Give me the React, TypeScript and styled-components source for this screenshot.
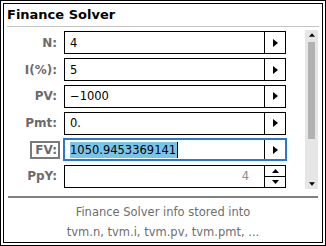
import { FC } from "react";
import styled, { createGlobalStyle } from "styled-components";

const GlobalStyle = createGlobalStyle`
    html, body {
        margin: 0;
        padding: 0;
        background: #ffffff;
    }
    * {
        box-sizing: border-box;
    }
`;

const Frame = styled.div`
    width: 326px;
    height: 246px;
    border: 1px solid #000;
    padding: 2px;
    background: #fff;
`;

const Screen = styled.div`
    height: 100%;
    border: 1px solid #000;
    display: flex;
    flex-direction: column;
    font-family: "DejaVu Sans", "Liberation Sans", sans-serif;
`;

const Title = styled.div`
    height: 23px;
    padding: 3px 0 0 3px;
    font-size: 13px;
    font-weight: bold;
    color: #000;
    line-height: 16px;
`;

const TitleRule = styled.div`
    height: 1px;
    margin: 0 3px 0 3px;
    background: #c4c4c4;
`;

const Body = styled.div`
    display: flex;
    padding-top: 4px;
    height: 168px;
`;

const Form = styled.div`
    display: flex;
    flex-direction: column;
    gap: 3.7px;
`;

const Row = styled.div`
    display: flex;
    align-items: center;
    gap: 7px;
    height: 23px;
`;

const LabelCell = styled.div`
    width: 53px;
    display: flex;
    justify-content: flex-end;
`;

const Label = styled.span<{ $boxed?: boolean }>`
    font-size: 12px;
    font-weight: bold;
    color: #6b6b6b;
    line-height: 14px;
    padding: ${({ $boxed }) => ($boxed ? "0 1px 0 3px" : "0")};
    margin-right: ${({ $boxed }) => ($boxed ? "-3px" : "0")};
    border: ${({ $boxed }) => ($boxed ? "2px solid #7a7a7a" : "none")};
`;

const Field = styled.div<{ $active?: boolean }>`
    width: 222px;
    height: 23px;
    display: flex;
    border: ${({ $active }) => ($active ? "2px solid #2a78cf" : "1px solid #000")};
    margin: ${({ $active }) => ($active ? "0 -1px" : "0")};
    width: ${({ $active }) => ($active ? "224px" : "222px")};
    background: #fff;
`;

const Value = styled.div<{ $right?: boolean }>`
    flex: 1;
    display: flex;
    align-items: center;
    justify-content: ${({ $right }) => ($right ? "flex-end" : "flex-start")};
    padding: ${({ $right }) => ($right ? "0 15px 0 0" : "0 0 0 5px")};
    font-size: 11.5px;
    color: ${({ $right }) => ($right ? "#8a8a8a" : "#000")};
`;

const Selected = styled.span`
    background: #7cc3e8;
    line-height: 16px;
    padding: 0 1px 0 0;
`;

const Caret = styled.span`
    display: inline-block;
    width: 1px;
    height: 16px;
    background: #000;
`;

const ArrowButton = styled.div`
    width: 21px;
    border-left: 1px solid #000;
    display: flex;
    align-items: center;
    justify-content: center;
`;

const Spinner = styled.div`
    width: 21px;
    border-left: 1px solid #000;
    display: flex;
    flex-direction: column;
`;

const SpinHalf = styled.div<{ $top?: boolean }>`
    flex: 1;
    display: flex;
    align-items: center;
    justify-content: center;
    border-bottom: ${({ $top }) => ($top ? "1px solid #000" : "none")};
`;

const Scrollbar = styled.div`
    margin-left: 19px;
    margin-top: -1px;
    width: 13px;
    height: 159px;
    background: #e6e6e6;
    display: flex;
    flex-direction: column;
    align-items: center;
    padding: 3px 0 3px 0;
`;

const Thumb = styled.div`
    width: 7px;
    height: 97px;
    margin-top: 5px;
    background: #b2b2b2;
`;

const Spacer = styled.div`
    flex: 1;
`;

const InfoRule = styled.div`
    height: 2px;
    margin: 5px 4px 0 4px;
    background: #808080;
`;

const Info = styled.div`
    padding-top: 4px;
    text-align: center;
    font-size: 11.5px;
    color: #6e6e6e;
    line-height: 20px;
`;

const TriRight: FC = () => (
    <svg width="5" height="8" viewBox="0 0 5 8">
        <path d="M0 0 L5 4 L0 8 Z" fill="#000" />
    </svg>
);

const TriUp: FC<{ w?: number }> = ({ w = 7 }) => (
    <svg width={w} height="4" viewBox="0 0 7 4">
        <path d="M0 4 L3.5 0 L7 4 Z" fill="#000" />
    </svg>
);

const TriDown: FC<{ w?: number }> = ({ w = 7 }) => (
    <svg width={w} height="4" viewBox="0 0 7 4">
        <path d="M0 0 L7 0 L3.5 4 Z" fill="#000" />
    </svg>
);

const rows = [
    { label: "N:", value: "4" },
    { label: "I(%):", value: "5" },
    { label: "PV:", value: "\u22121000" },
    { label: "Pmt:", value: "0." },
];

const App: FC = () => {
    return (
        <>
            <GlobalStyle />
            <Frame>
                <Screen>
                    <Title>Finance Solver</Title>
                    <TitleRule />
                    <Body>
                        <Form>
                            {rows.map((r) => (
                                <Row key={r.label}>
                                    <LabelCell>
                                        <Label>{r.label}</Label>
                                    </LabelCell>
                                    <Field>
                                        <Value>{r.value}</Value>
                                        <ArrowButton>
                                            <TriRight />
                                        </ArrowButton>
                                    </Field>
                                </Row>
                            ))}
                            <Row>
                                <LabelCell>
                                    <Label $boxed>FV:</Label>
                                </LabelCell>
                                <Field $active>
                                    <Value>
                                        <Selected>1050.9453369141</Selected>
                                        <Caret />
                                    </Value>
                                    <ArrowButton>
                                        <TriRight />
                                    </ArrowButton>
                                </Field>
                            </Row>
                            <Row>
                                <LabelCell>
                                    <Label>PpY:</Label>
                                </LabelCell>
                                <Field>
                                    <Value $right>4</Value>
                                    <Spinner>
                                        <SpinHalf $top>
                                            <TriUp />
                                        </SpinHalf>
                                        <SpinHalf>
                                            <TriDown />
                                        </SpinHalf>
                                    </Spinner>
                                </Field>
                            </Row>
                        </Form>
                        <Scrollbar>
                            <TriUp w={6} />
                            <Thumb />
                            <Spacer />
                            <TriDown w={6} />
                        </Scrollbar>
                    </Body>
                    <InfoRule />
                    <Info>
                        Finance Solver info stored into
                        <br />
                        tvm.n, tvm.i, tvm.pv, tvm.pmt, ...
                    </Info>
                </Screen>
            </Frame>
        </>
    );
};

export default App;
